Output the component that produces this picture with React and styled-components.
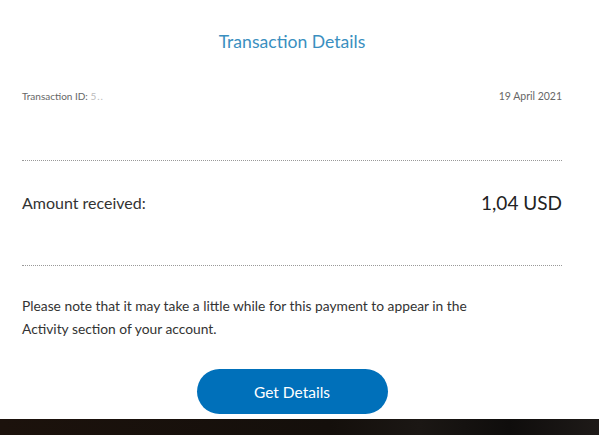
import React from 'react';
import styled, { createGlobalStyle } from 'styled-components';

const GlobalStyle = createGlobalStyle`
  html, body {
    margin: 0;
    padding: 0;
    background: #ffffff;
  }
  body {
    font-family: Lato, "Open Sans", sans-serif;
  }
`;

const Page = styled.div`
  width: 599px;
  height: 435px;
  display: flex;
  flex-direction: column;
  overflow: hidden;
`;

const Card = styled.div`
  flex: 1;
  background: #fff;
  padding: 0 37px 0 22px;
  display: flex;
  flex-direction: column;
`;

const Title = styled.h2`
  margin: 31px 0 0;
  text-align: center;
  font-size: 17.6px;
  font-weight: 400;
  color: #3a8fc0;
`;

const Row = styled.div`
  display: flex;
  justify-content: space-between;
  align-items: center;
  margin-top: ${p => p.$top}px;
`;

const Meta = styled.span`
  font-size: ${p => p.$size || 10}px;
  color: #666;
`;

const Masked = styled.span`
  color: #bbb;
  letter-spacing: 1px;
`;

const Divider = styled.hr`
  border: none;
  border-top: 1px dotted #999;
  margin: ${p => p.$top}px 0 0;
  height: 0;
`;

const Label = styled.span`
  font-size: 16px;
  color: #333;
`;

const Amount = styled.span`
  font-size: 19px;
  color: #222;
`;

const Note = styled.p`
  margin: 28px 0 0;
  max-width: 470px;
  font-size: 13.8px;
  line-height: 23px;
  color: #333;
`;

const ButtonWrap = styled.div`
  display: flex;
  justify-content: center;
  margin-top: 29px;
`;

const Button = styled.button`
  width: 191px;
  height: 45px;
  border: none;
  border-radius: 23px;
  background: #0070ba;
  color: #fff;
  font-family: inherit;
  font-size: 15.5px;
  cursor: pointer;
`;

const Footer = styled.div`
  height: 16px;
  background: linear-gradient(90deg, #1c120c 0%, #140f0b 55%, #1b1714 70%, #0f0d0c 85%, #1e1a18 100%);
`;

const App = () => {
  return (
    <Page>
      <GlobalStyle />
      <Card>
        <Title>Transaction Details</Title>
        <Row $top={38}>
          <Meta>Transaction ID: <Masked>5..</Masked></Meta>
          <Meta $size={10.5}>19 April 2021</Meta>
        </Row>
        <Divider $top={58} />
        <Row $top={30}>
          <Label>Amount received:</Label>
          <Amount>1,04 USD</Amount>
        </Row>
        <Divider $top={51} />
        <Note>
          Please note that it may take a little while for this payment to appear in the
          Activity section of your account.
        </Note>
        <ButtonWrap>
          <Button>Get Details</Button>
        </ButtonWrap>
      </Card>
      <Footer />
    </Page>
  );
};

export default App;
